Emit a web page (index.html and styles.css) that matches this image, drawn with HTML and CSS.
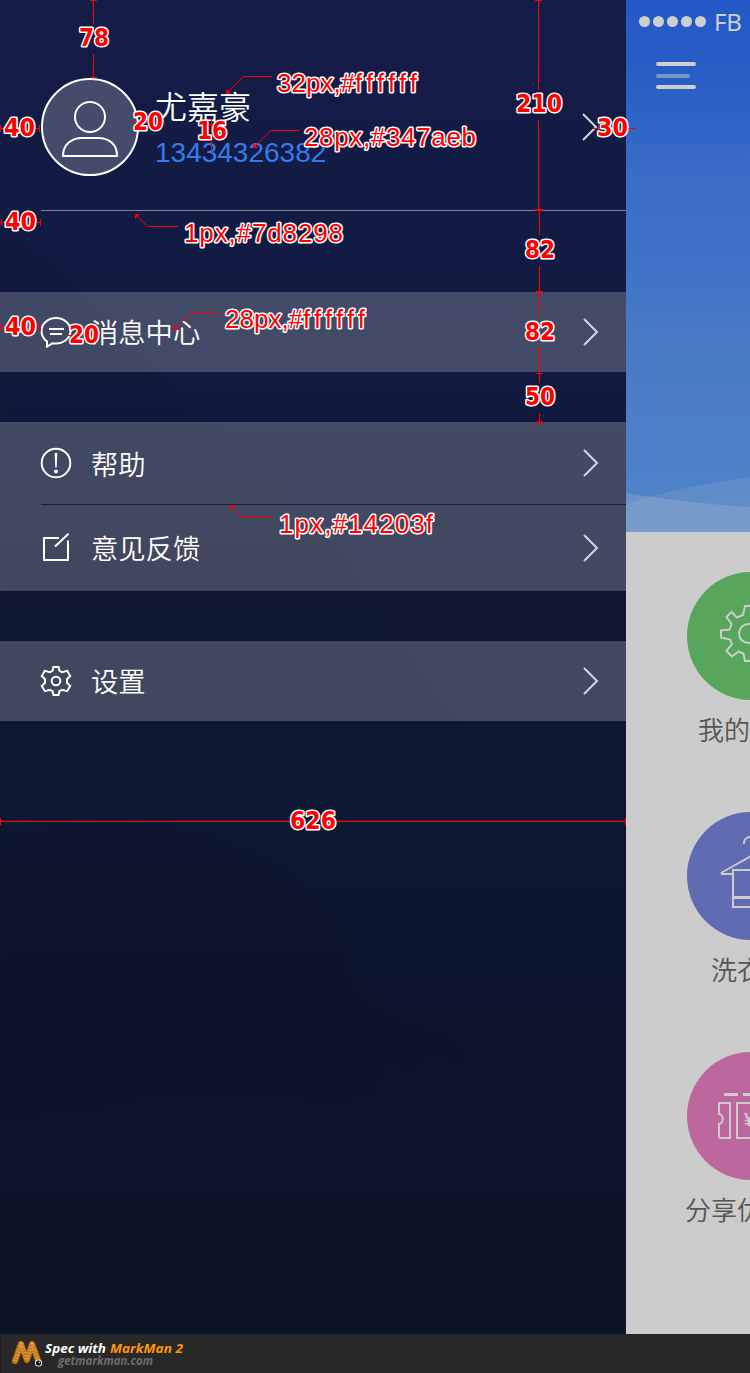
FILE: index.html
```html
<!DOCTYPE html>
<html lang="zh-CN">
<head>
<meta charset="utf-8">
<title>个人中心</title>
<link rel="stylesheet" href="styles.css">
</head>
<body>
<div class="screen">
  <aside class="drawer">
    <svg class="scenery" viewBox="0 0 626 1334" aria-hidden="true">
      <defs><linearGradient id="fade" x1="0" y1="225" x2="0" y2="780" gradientUnits="userSpaceOnUse"><stop offset="0" stop-color="#0a1024"/><stop offset=".5" stop-color="#0a1024"/><stop offset="1" stop-color="#0a1024" stop-opacity="0"/></linearGradient></defs>
      <path class="scenery-far" fill="url(#fade)" d="M0 225L60 268 130 350 190 410 270 475 340 550 430 690 500 780H0z"/>
      <path class="scenery-near" d="M0 840Q110 815 210 838L280 872 300 890 340 920 345 950 356 992 392 1016 440 1032 465 1048 460 1062 425 1055 415 1070 385 1062 375 1090 340 1102 250 1090 150 1095 80 1110 0 1115z"/>
    </svg>
    <header class="profile">
      <svg class="avatar" viewBox="0 0 98 98"><circle cx="49" cy="49" r="48" fill="#444b6b"/><circle cx="49" cy="39" r="15"/><path d="M22 78C22 66 31 60 41 60H57C68 60 76 66 76 78Z"/></svg>
      <div class="identity">
        <div class="name">尤嘉豪</div>
        <div class="phone">13434326382</div>
      </div>
      <svg class="chevron" viewBox="0 0 17 30"><path d="M2 2L15 15 2 28"/></svg>
    </header>
    <nav class="menu">
      <section class="group">
        <div class="row">
          <svg class="icon" viewBox="0 0 32 32"><path d="M7 25.5V30.5L12.5 27.3C22 29 30.5 23 30.5 14.8C30.5 7.500 24 2 16 2S1.500 7.500 1.500 14.800C1.500 19.500 3.700 23.200 7 25.500ZM9 13H24M10 18H22"/></svg>
          <span>消息中心</span>
          <svg class="chevron" viewBox="0 0 17 30"><path d="M2 2L15 15 2 28"/></svg>
        </div>
      </section>
      <section class="group">
        <div class="row row-help">
          <svg class="icon" viewBox="0 0 32 32"><circle cx="16" cy="16" r="14.300"/><path d="M14.700 6H17.300L16.700 20.500H15.300Z" class="solid"/><circle cx="16" cy="24.500" r="2" class="solid"/></svg>
          <span>帮助</span>
          <svg class="chevron" viewBox="0 0 17 30"><path d="M2 2L15 15 2 28"/></svg>
        </div>
        <div class="divider"></div>
        <div class="row row-feedback">
          <svg class="icon" viewBox="0 0 32 32"><path d="M19 6H4V28H28V8.500M15 14.500L28.500 1.700"/></svg>
          <span>意见反馈</span>
          <svg class="chevron" viewBox="0 0 17 30"><path d="M2 2L15 15 2 28"/></svg>
        </div>
      </section>
      <section class="group">
        <div class="row">
          <svg class="icon" viewBox="0 0 32 32"><circle cx="16" cy="16" r="4.300"/><path d="M13.400 2H18.600L19.500 5.800Q20.600 6.300 22 7.200L27.200 5.800 30.200 11 27 14.200V17.800L30.200 21 27.200 26.200 22 24.800Q20.600 25.700 19.500 26.200L18.600 30H13.400L12.500 26.200Q11.400 25.700 10 24.800L4.800 26.200 1.800 21 5 17.800V14.200L1.800 11 4.800 5.800 10 7.200Q11.400 6.300 12.500 5.800Z"/></svg>
          <span>设置</span>
          <svg class="chevron" viewBox="0 0 17 30"><path d="M2 2L15 15 2 28"/></svg>
        </div>
      </section>
    </nav>
  </aside>

  <main class="home">
    <div class="hero">
      <div class="status"><i></i><i></i><i></i><i></i><i></i><span>FB</span></div>
      <div class="burger"><b></b><b></b><b></b></div>
      <svg class="waves" viewBox="0 0 124 60"><path d="M0 32Q55 14 124 5V60H0z" fill="#d2d2d2" opacity=".12"/><path d="M0 21Q60 31 124 35V60H0z" fill="#d2d2d2" opacity=".2"/></svg>
    </div>
    <div class="tiles">
      <div class="tile">
        <svg class="disc" viewBox="0 0 128 128"><circle cx="64" cy="64" r="64" fill="#57a65b"/><g class="line"><circle cx="61.500" cy="61.500" r="9.500"/><path d="M67 34H58L56 43 50 45.500 44.500 40 39.500 45 44.500 52 42.500 57.500 34 58.500V65.500L43 67.500 45 72 39.500 79 45 84.500 51.500 79.500 56.500 81.500 58 89H67"/></g></svg>
        <span>我的</span>
      </div>
      <div class="tile tile-wash">
        <svg class="disc" viewBox="0 0 128 128"><circle cx="64" cy="64" r="64" fill="#5f6cb2"/><g class="line"><path d="M57 32C56 24 69 22 71 30C72 36 64 36 64 43M34 61L64 44V58M34 62H46M46 95V58H82V95Z"/><path d="M46 85.500H82" stroke-width="3"/></g></svg>
        <span>洗衣</span>
      </div>
      <div class="tile tile-share">
        <svg class="disc" viewBox="0 0 128 128"><circle cx="64" cy="64" r="64" fill="#bc689f"/><g class="line"><path d="M37 42.500H51M56 42.500H80" stroke-width="3"/><path d="M32 51H43V86H34Q32 86 32 84V72C37 71 37 63 32 62ZM50 51H90V86H50Z"/></g><text x="57" y="74" class="yen">¥</text></svg>
        <span>分享优</span>
      </div>
    </div>
  </main>

  <svg class="spec" viewBox="0 0 750 1334">
    <g class="rules">
      <path d="M93.500 0V24M93.500 54V78M90 .5H97M90 77.500H97"/>
      <path d="M538.500 0V90M538.500 120V210M539.500 210V235M539.500 266V317M539.500 348V383M539.500 413V422M536 373.500H543"/>
      <path d="M535 0H542M535 210H543M536 292H543M536 422.500H543" stroke-width="2"/>
      <path d="M0 128.500H40M.5 125V132M39.500 125V132M1 222.500H40M1.500 219V226M40.500 219V226M1 327.500H40M1.500 324V331M40.500 324V331"/>
      <path d="M132 122.500H165M211.500 119V149M208 124.500H215M208 139.500H215M593 128.500H635M598.500 125V132M68 335.500H101"/>
      <path d="M0 821.500H290M336 821.500H626M.5 818V825M625.500 818V825"/>
      <path d="M228 92L243.500 76.500H272M255 146L271 130.500H299M136 215L147.500 226.500H178M175 328L191 312.500H219M231 507L242 517.500H272"/>
    </g>
    <path fill="red" d="M226 89V94H231ZM253 143V148H258ZM135 214H140L135 219ZM174 325V330H179ZM230 505H235L230 510Z"/>
    <g class="num">
      <text x="79" y="46" textLength="30" lengthAdjust="spacingAndGlyphs">78</text>
      <text x="4" y="136" textLength="31" lengthAdjust="spacingAndGlyphs">40</text>
      <text x="133" y="130" textLength="30" lengthAdjust="spacingAndGlyphs">20</text>
      <text x="197" y="139" textLength="30" lengthAdjust="spacingAndGlyphs">16</text>
      <text x="516" y="112" textLength="46" lengthAdjust="spacingAndGlyphs">210</text>
      <text x="597" y="136" textLength="31" lengthAdjust="spacingAndGlyphs">30</text>
      <text x="5" y="230" textLength="31" lengthAdjust="spacingAndGlyphs">40</text>
      <text x="525" y="258" textLength="30" lengthAdjust="spacingAndGlyphs">82</text>
      <text x="5" y="335" textLength="31" lengthAdjust="spacingAndGlyphs">40</text>
      <text x="69" y="343" textLength="30" lengthAdjust="spacingAndGlyphs">20</text>
      <text x="525" y="340" textLength="30" lengthAdjust="spacingAndGlyphs">82</text>
      <text x="525" y="405" textLength="30" lengthAdjust="spacingAndGlyphs">50</text>
      <text x="290" y="829" textLength="46" lengthAdjust="spacingAndGlyphs">626</text>
    </g>
    <g class="note">
      <text x="277" y="92">32px,#<tspan class="wide">ffffff</tspan></text>
      <text x="304" y="146" textLength="172" lengthAdjust="spacing">28px,#347aeb</text>
      <text x="184" y="242" textLength="159" lengthAdjust="spacing">1px,#7d8298</text>
      <text x="225" y="328">28px,#<tspan class="wide">ffffff</tspan></text>
      <text x="279" y="533" textLength="154" lengthAdjust="spacing">1px,#14203f</text>
    </g>
  </svg>
</div>

<footer class="credit">
  <svg class="logo" viewBox="0 0 34 30">
    <g fill="none" stroke-linecap="round" stroke-linejoin="round"><path d="M4 22L10 5 16 21 21 5 28 24" stroke="#6e390f" stroke-width="7"/><path d="M4 22L10 5 16 21 21 5 28 24" stroke="#c57a1d" stroke-width="5.500"/><path d="M4 22L10 5 16 21 21 5 28 24" stroke="#dba350" stroke-width="4" stroke-dasharray="1 2" stroke-linecap="butt"/></g>
    <circle cx="27.500" cy="24" r="3.600" fill="#eee"/><circle cx="27.500" cy="24" r="2.600" fill="#111"/><circle cx="28.500" cy="23.500" r=".8" fill="#fff"/>
  </svg>
  <svg class="credit-text" viewBox="0 0 150 34"><text x="1" y="15.500" class="c1" textLength="61" lengthAdjust="spacingAndGlyphs">Spec with</text><text x="66" y="15.500" class="c2" textLength="73" lengthAdjust="spacingAndGlyphs">MarkMan 2</text><text x="14" y="28" class="c3" textLength="95" lengthAdjust="spacingAndGlyphs">getmarkman.com</text></svg>
</footer>
</body>
</html>
```
FILE: styles.css
```css
* { box-sizing: border-box; }
body { margin: 0; width: 750px; font-family: "Liberation Sans", "Noto Sans CJK SC", sans-serif; }
svg { display: block; flex: none; }
.screen { position: relative; display: flex; width: 750px; height: 1334px; overflow: hidden; }

.drawer { position: relative; flex: none; width: 626px; color: #fff;
  background: linear-gradient(180deg, #141c48 0, #121b43 250px, #111a3e 400px, #0f1735 600px, #0e1733 800px, #0d162e 1000px, #0b1324 1334px); }
.scenery { position: absolute; left: 0; top: 0; width: 626px; height: 1334px; filter: blur(2px); }
.scenery-far { opacity: .13; }
.scenery-near { fill: #0a1020; opacity: .28; }

.profile { position: relative; display: flex; align-items: center; height: 211px; margin-left: 41px; padding: 43px 28px 0 0; border-bottom: 1px solid #7d8298; }
.avatar { width: 98px; height: 98px; fill: none; stroke: #fff; stroke-width: 2; }
.identity { flex: 1; padding: 5px 0 0 16px; }
.name { margin-bottom: 3px; font-family: "Noto Sans CJK SC", sans-serif; font-size: 32px; font-weight: 350; line-height: 45px; }
.phone { font-family: "Liberation Sans", sans-serif; font-size: 28px; line-height: 44px; color: #347aeb; }
.chevron { width: 17px; height: 30px; fill: none; stroke: #d5d7df; stroke-width: 2; }

.menu { position: relative; display: flex; flex-direction: column; gap: 50px; padding-top: 81px; }
.group { background: rgba(255, 255, 255, .21); }
.row { display: flex; align-items: center; height: 80px; padding: 0 27px 0 40px; font-size: 27.300px; font-weight: 350; }
.row span { flex: 1; padding: 3px 0 0 19px; line-height: 40px; }
.row-help { height: 82px; }
.row-help span { padding-top: 6px; }
.row-feedback { height: 86px; }
.divider { height: 1px; margin-left: 41px; background: #14203f; }
.icon { width: 32px; height: 32px; fill: none; stroke: #fff; stroke-width: 2; }
.solid { fill: #fff; stroke: none; }

.home { flex: none; width: 124px; overflow: hidden; background: #ccc; }
.hero { display: flex; flex-direction: column; align-items: flex-start; height: 532px;
  background: linear-gradient(180deg, #2358c8 0, #2a5fc5 90px, #396cc6 170px, #3e71c8 260px, #4779c5 330px, #4e82c8 470px, #5184c8 532px); }
.status { display: flex; align-items: center; gap: 3px; height: 43px; padding-left: 13px; }
.status i { width: 11px; height: 11px; border-radius: 50%; background: #cecece; }
.status span { margin-left: 5px; font: 24px/42px "Noto Sans", sans-serif; letter-spacing: -.3px; color: #cecece; }
.burger { display: flex; flex-direction: column; gap: 7.500px; margin: 19px 0 0 30px; }
.burger b { width: 40px; height: 4px; border-radius: 2px; background: #cecece; }
.burger b:nth-child(2) { width: 34px; opacity: .5; }
.waves { width: 124px; height: 60px; margin-top: auto; }
.tiles { padding-top: 40px; }
.tile { height: 240px; padding-left: 61px; white-space: nowrap; }
.disc { width: 128px; height: 128px; }
.line { fill: none; stroke: #ccc; stroke-width: 2; }
.yen { font: bold 18px "Liberation Sans", sans-serif; fill: #ccc; }
.tile span { display: block; margin: 11px 0 0 11px; font-size: 26px; font-weight: 350; line-height: 40px; color: #555; }
.tile-wash span { margin-left: 24px; }
.tile-share span { margin-left: -2px; }

.spec { position: absolute; left: 0; top: 0; width: 750px; height: 1334px; }
.rules { fill: none; stroke: #f00; stroke-width: 1; }
.num, .note { fill: #f00; stroke: #fff; stroke-width: 3px; stroke-linejoin: round; paint-order: stroke; }
.num { font: bold condensed 24px "DejaVu Sans", sans-serif; }
.note { font: 26px "Liberation Sans", sans-serif; }
.wide { letter-spacing: 4.200px; }

.credit { display: flex; align-items: center; height: 39px; padding-left: 10px; background: #282828; border-left: 1px solid #1c1c1c; }
.logo { width: 34px; height: 30px; }
.credit-text { width: 150px; height: 34px; margin-left: -1px; font: italic bold 13px "Open Sans", sans-serif; }
.c1 { fill: #fff; }
.c2 { fill: #ff9500; }
.c3 { fill: #6c6c6c; font-size: 11.500px; }
```
